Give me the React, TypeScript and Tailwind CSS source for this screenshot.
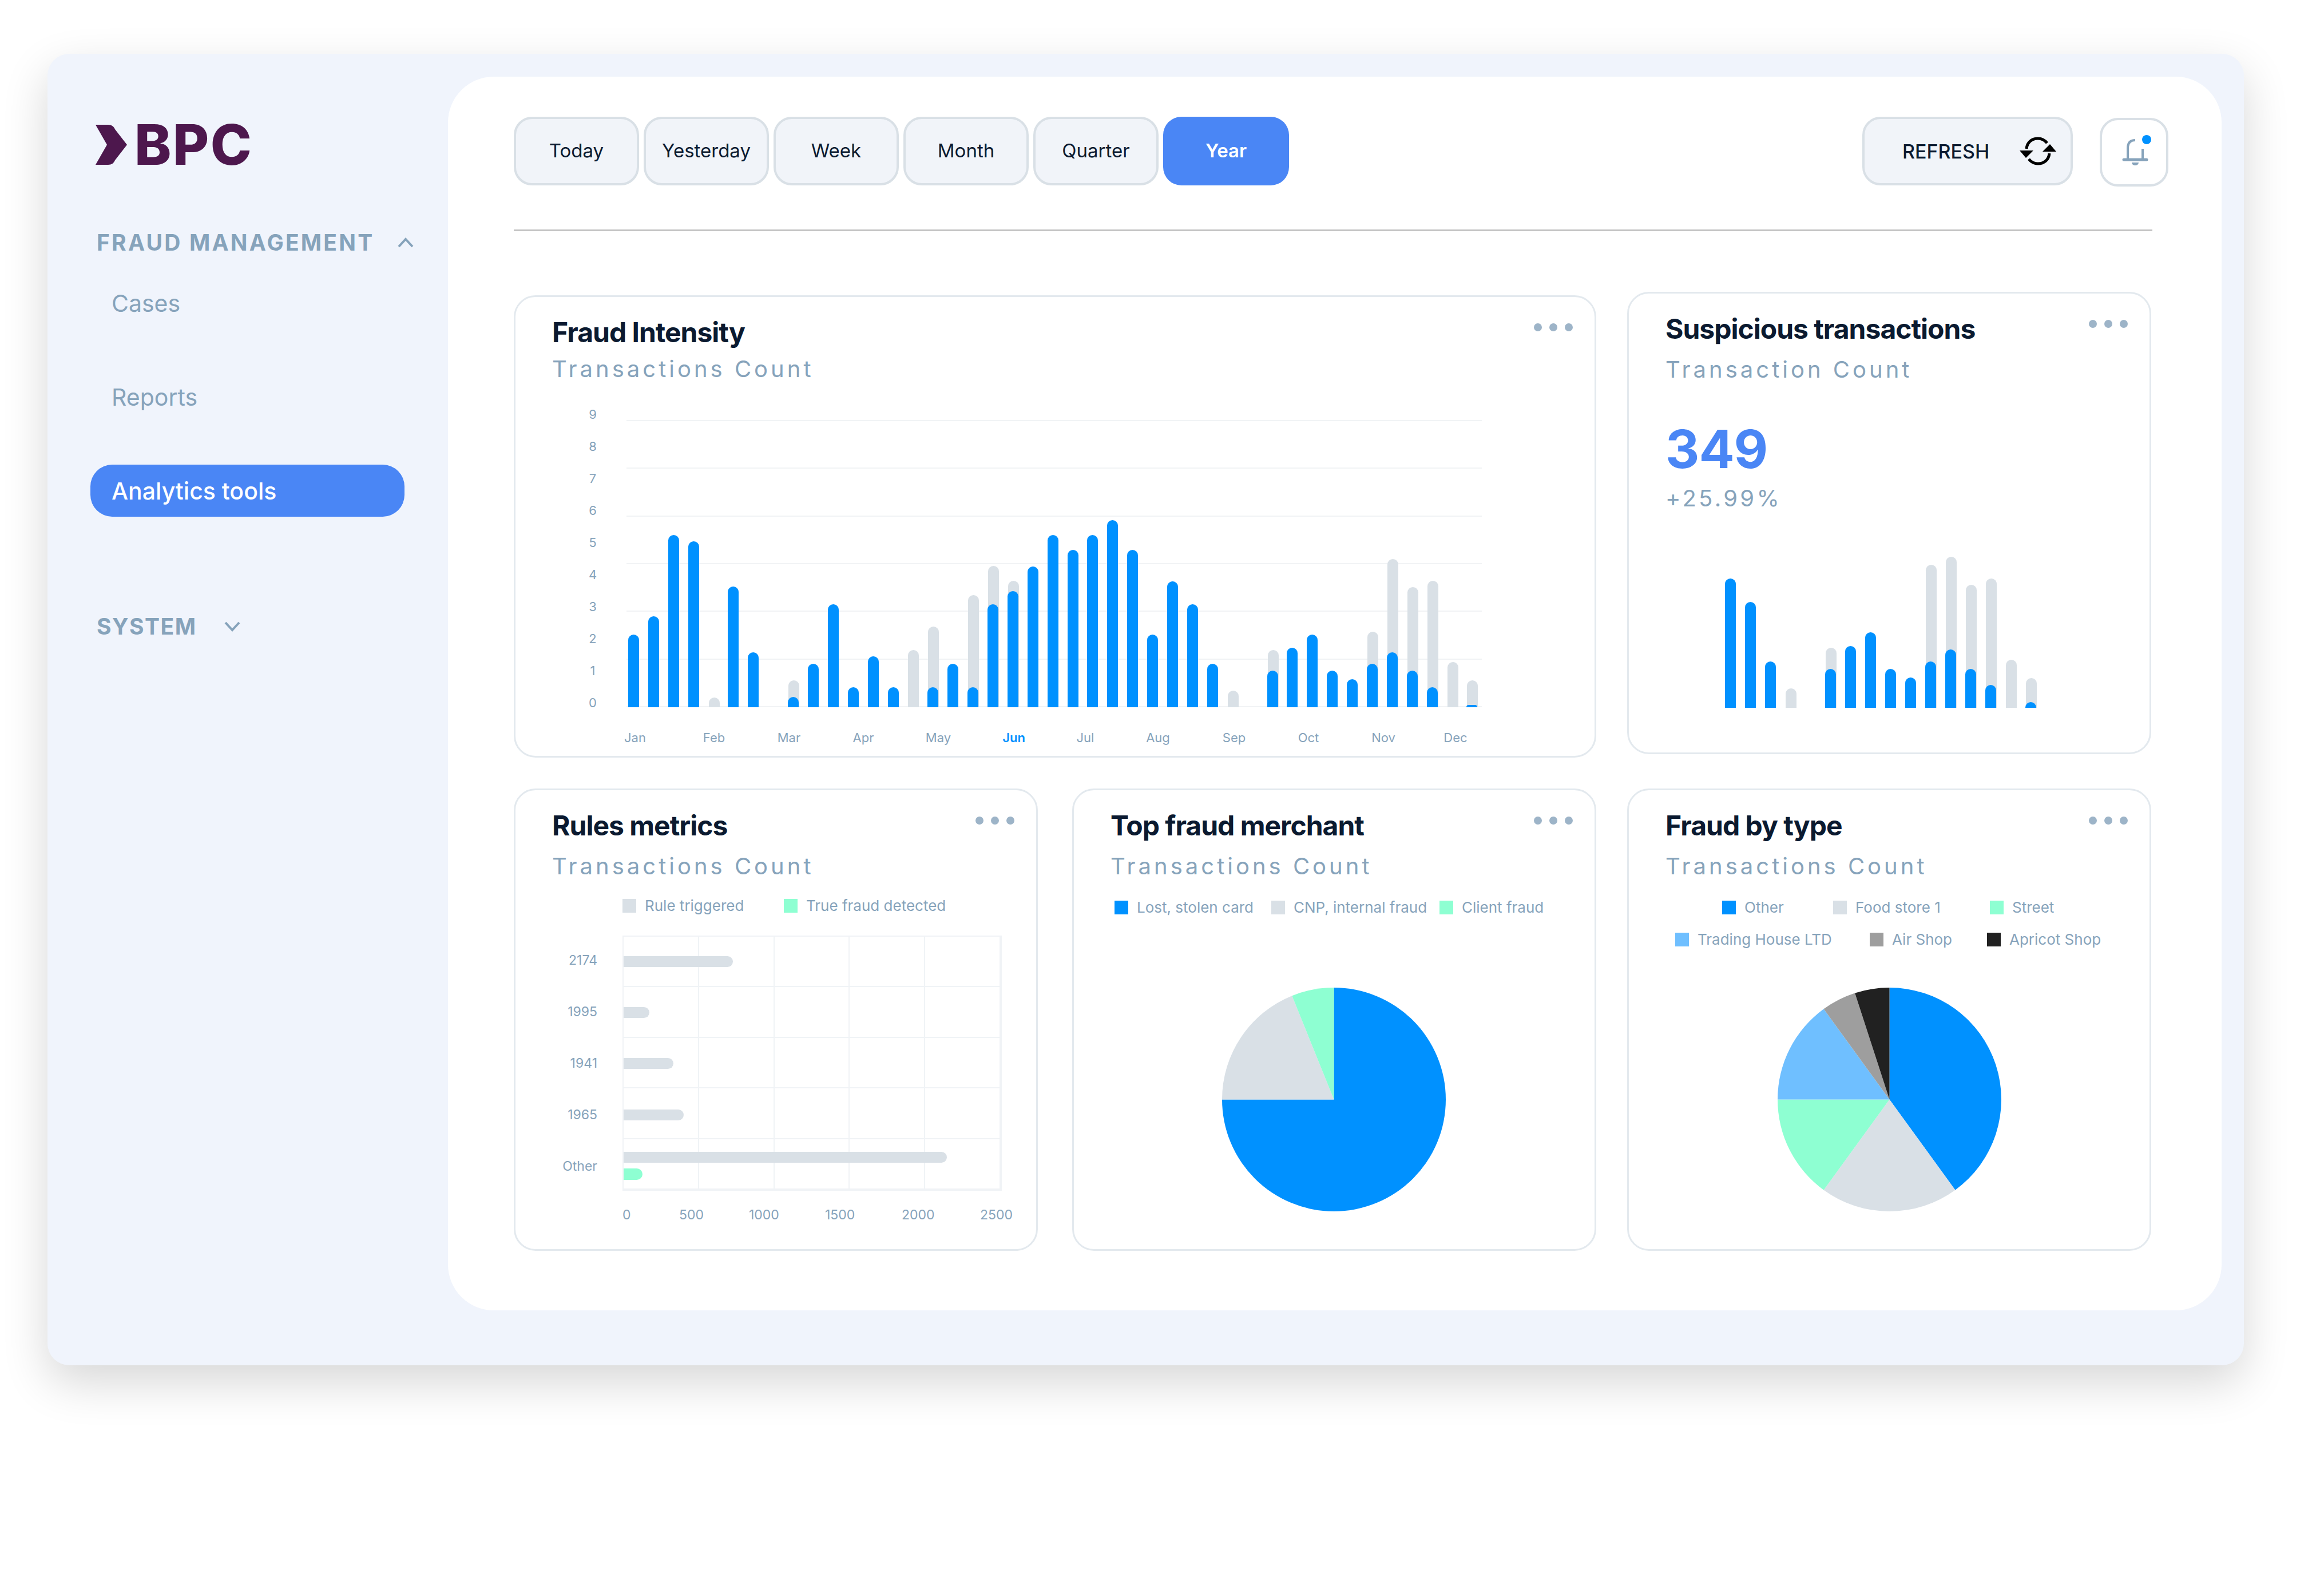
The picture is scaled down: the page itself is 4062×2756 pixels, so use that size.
import React from 'react';

const font = "[font-family:Inter,'Liberation_Sans',sans-serif]";

const ranges = ['Today', 'Yesterday', 'Week', 'Month', 'Quarter', 'Year'];

// [blue height, grey height] per slot, px from the baseline
const intensity: [number, number][] = [
  [127, 0], [159, 0], [301, 0], [290, 0], [0, 17], [211, 0], [96, 0], [0, 0], [18, 47], [76, 0], [180, 0],
  [35, 0], [89, 0], [35, 0], [0, 100], [35, 141], [76, 0], [35, 196], [180, 247], [203, 221], [246, 0], [301, 0],
  [275, 0], [301, 0], [327, 0], [275, 0], [127, 0], [220, 0], [180, 0], [76, 0], [0, 29], [0, 0], [64, 100],
  [104, 0], [127, 0], [64, 0], [49, 0], [76, 132], [96, 259], [64, 210], [35, 221], [0, 79], [4, 47],
];

const suspicious: [number, number][] = [
  [226, 0], [185, 0], [81, 0], [0, 34], [0, 0], [68, 105], [108, 0], [132, 0], [68, 0], [53, 0],
  [81, 250], [102, 264], [68, 215], [40, 226], [0, 84], [10, 52],
];

const months = [
  ['Jan', 1110], ['Feb', 1248], ['Mar', 1379], ['Apr', 1509], ['May', 1640], ['Jun', 1772],
  ['Jul', 1897], ['Aug', 2024], ['Sep', 2157], ['Oct', 2287], ['Nov', 2418], ['Dec', 2544],
] as const;

function polar(cx: number, cy: number, r: number, deg: number) {
  const a = ((deg - 90) * Math.PI) / 180;
  return `${cx + r * Math.cos(a)} ${cy + r * Math.sin(a)}`;
}

function Pie({ slices }: { slices: [number, number, string][] }) {
  return (
    <svg width="391" height="391" viewBox="0 0 392 392" className="block">
      {slices.map(([from, to, color]) => (
        <path
          key={color}
          fill={color}
          d={`M196 196L${polar(196, 196, 196, from)}A196 196 0 ${to - from > 180 ? 1 : 0} 1 ${polar(196, 196, 196, to)}Z`}
        />
      ))}
    </svg>
  );
}

function Dots() {
  return (
    <div className="flex gap-[13px]">
      <span className="h-[14px] w-[14px] rounded-full bg-[#9db4c8]" />
      <span className="h-[14px] w-[14px] rounded-full bg-[#9db4c8]" />
      <span className="h-[14px] w-[14px] rounded-full bg-[#9db4c8]" />
    </div>
  );
}

function Card({ title, sub, className, subClass = 'mt-[18px]', children }: { title: string; sub: string; className: string; subClass?: string; children?: React.ReactNode }) {
  return (
    <div className={`relative rounded-[38px] border-[3px] border-[#e3e9ee] bg-white pl-[64px] ${className}`}>
      <div className="absolute right-[38px] top-[46px]">
        <Dots />
      </div>
      <h3 className="pt-[33px] text-[48px] leading-[58px] font-bold tracking-[-1px] text-[#0b1a30]">{title}</h3>
      <p className={`text-[40px] leading-[48px] tracking-[5px] text-[#86a3bb] ${subClass}`}>{sub}</p>
      {children}
    </div>
  );
}

function Bar({ blue, grey }: { blue: number; grey: number }) {
  return (
    <div className="relative w-[19px]">
      {grey > 0 && <div className="absolute bottom-0 left-px w-[19px] rounded-t-full bg-[#d9e0e6]" style={{ height: grey }} />}
      {blue > 0 && <div className="absolute bottom-0 left-0 w-[19px] rounded-t-full bg-[#0091ff]" style={{ height: blue }} />}
    </div>
  );
}

function Legend({ color, label, className }: { color: string; label: string; className?: string }) {
  return (
    <div className={`flex items-center gap-[15px] ${className ?? ''}`}>
      <span className="h-[24px] w-[24px] shrink-0" style={{ background: color }} />
      <span className="text-[26px] leading-[32px] whitespace-nowrap text-[#86a3bb]">{label}</span>
    </div>
  );
}

function RefreshIcon() {
  return (
    <svg width="64" height="50" viewBox="0 0 64 50" fill="none">
      <path d="M12 21C13 10 21 3 32 3c7 0 12 3 16 8" stroke="#000" strokeWidth="5" />
      <path d="M52 29C51 40 43 47 32 47c-7 0-12-3-16-8" stroke="#000" strokeWidth="5" />
      <path d="M0 24h24L11 37Z" fill="#000" />
      <path d="M64 26H40L53 13Z" fill="#000" />
    </svg>
  );
}

function BellIcon() {
  return (
    <svg width="48" height="48" viewBox="0 0 48 48" fill="none">
      <path d="M24 3C15 3 11 8 11 17v20" stroke="#86a3bb" strokeWidth="4" />
      <path d="M37 18v19" stroke="#86a3bb" strokeWidth="4" />
      <path d="M4 37h40" stroke="#86a3bb" strokeWidth="5" strokeLinecap="round" />
      <path d="M18 42h12c0 3-3 5-6 5s-6-2-6-5Z" fill="#86a3bb" />
    </svg>
  );
}

export default function App() {
  return (
    <div className={`min-h-[2756px] bg-white pt-[94px] pl-[83px] ${font}`}>
      <div className="flex h-[2292px] w-[3839px] rounded-[38px] bg-[#f0f4fc] shadow-[0_30px_80px_rgba(0,0,0,0.16)]">
        {/* sidebar */}
        <aside className="w-[700px] shrink-0 pl-[75px]">
          <div className="mt-[124px] flex items-center gap-[13px] pl-[9px]">
            <svg width="55" height="70" viewBox="0 0 55 70">
              <path d="M0 0h22c6 0 10 3 12 8l21 27-21 27c-2 5-6 8-12 8H0l20-35Z" fill="#4d174d" />
            </svg>
            <span className="text-[97px] leading-[70px] font-extrabold tracking-[2.5px] text-[#4d174d]">BPC</span>
          </div>

          <div className="mt-[112px] flex items-center gap-[41px] pl-[11px]">
            <span className="text-[39px] leading-[48px] font-bold tracking-[3.2px] text-[#86a3bb]">FRAUD MANAGEMENT</span>
            <svg width="28" height="18" viewBox="0 0 28 18" fill="none">
              <path d="M2 16L14 3l12 13" stroke="#86a3bb" strokeWidth="4" />
            </svg>
          </div>
          <div className="mt-[56px] flex flex-col text-[41px] leading-[52px] text-[#86a3bb]">
            <span className="pl-[37px]">Cases</span>
            <span className="mt-[112px] pl-[37px]">Reports</span>
            <span className="mt-[92px] flex h-[91px] w-[549px] items-center rounded-[38px] bg-[#4a86f5] pl-[37px] font-medium text-white">Analytics tools</span>
          </div>
          <div className="mt-[168px] flex items-center gap-[48px] pl-[11px]">
            <span className="text-[39px] leading-[48px] font-bold tracking-[1.5px] text-[#86a3bb]">SYSTEM</span>
            <svg width="28" height="18" viewBox="0 0 28 18" fill="none">
              <path d="M2 2l12 13L26 2" stroke="#86a3bb" strokeWidth="4" />
            </svg>
          </div>
        </aside>

        {/* main */}
        <main className="mt-[40px] h-[2156px] w-[3100px] rounded-[80px] bg-white pt-[70px] pl-[115px]">
          <div className="flex h-[122px] w-[2892px] items-start justify-between">
            <div className="flex gap-[8px]">
              {ranges.map((r) =>
                r === 'Year' ? (
                  <button key={r} className="h-[120px] w-[220px] rounded-[32px] bg-[#4a86f5] text-[33px] font-semibold text-white">
                    {r}
                  </button>
                ) : (
                  <button key={r} className="h-[120px] w-[219px] rounded-[32px] border-[4px] border-[#d9e0e6] bg-[#f1f4f9] text-[33px] text-[#0b1a30]">
                    {r}
                  </button>
                ),
              )}
            </div>
            <div className="flex items-start gap-[47px]">
              <button className="flex h-[120px] w-[368px] items-center rounded-[32px] border-[4px] border-[#d9e0e6] bg-[#f1f4f9] pl-[66px] text-[34px] font-medium text-[#0b1a30]">
                <span className="w-[205px] text-left">REFRESH</span>
                <RefreshIcon />
              </button>
              <button className="relative mt-[2px] flex h-[120px] w-[120px] items-center justify-center rounded-[32px] border-[4px] border-[#d9e0e6] bg-white pl-[3px]">
                <BellIcon />
                <span className="absolute top-[26px] right-[26px] h-[16px] w-[16px] rounded-full bg-[#0091ff]" />
              </button>
            </div>
          </div>
          <div className="mt-[75px] h-[3px] w-[2864px] bg-[#c4c4c4]" />

          {/* top row */}
          <div className="mt-[106px] flex gap-[54px]">
            <Card title="Fraud Intensity" sub="Transactions Count" subClass="mt-[11px]" className="mt-[6px] h-[808px] w-[1892px]">
              <div className="relative">
                {/* plot area */}
                <div className="absolute top-[65px] left-[130px] flex h-[502px] w-[1495px] flex-col justify-between">
                  {[0, 1, 2, 3, 4, 5, 6].map((i) => (
                    <div key={i} className="h-[2px] bg-[#f1f3f5]" />
                  ))}
                </div>
                <div className="absolute top-[47px] left-[59px] flex h-[520px] w-[24px] flex-col justify-between text-center text-[22px] leading-[16px] text-[#86a3bb]">
                  {[9, 8, 7, 6, 5, 4, 3, 2, 1, 0].map((n) => (
                    <span key={n}>{n}</span>
                  ))}
                </div>
                <div className="absolute top-[227px] left-[133px] flex h-[340px] gap-[15.9px]">
                  {intensity.map(([b, g], i) => (
                    <Bar key={i} blue={b} grey={g} />
                  ))}
                </div>
                {months.map(([m, x]) => (
                  <span
                    key={m}
                    className={`absolute top-[606px] -translate-x-1/2 text-[22px] leading-[28px] ${m === 'Jun' ? 'font-semibold text-[#0091ff]' : 'text-[#86a3bb]'}`}
                    style={{ left: x - 965 }}
                  >
                    {m}
                  </span>
                ))}
              </div>
            </Card>

            <Card title="Suspicious transactions" sub="Transaction Count" className="h-[808px] w-[916px]">
              <p className="mt-[59px] text-[92px] leading-[112px] font-bold tracking-[-1px] text-[#4a86f5]">349</p>
              <p className="mt-[6px] text-[40px] leading-[48px] tracking-[4.3px] text-[#86a3bb]">+25.99%</p>
              <div className="mt-[72px] ml-[104px] flex h-[270px] gap-[16px]">
                {suspicious.map(([b, g], i) => (
                  <Bar key={i} blue={b} grey={g} />
                ))}
              </div>
            </Card>
          </div>

          {/* bottom row */}
          <div className="mt-[54px] flex">
            <Card title="Rules metrics" sub="Transactions Count" className="h-[808px] w-[916px]">
              <div className="mt-[29px] ml-[123px] flex">
                <Legend color="#d9e0e6" label="Rule triggered" className="w-[282px]" />
                <Legend color="#8effd2" label="True fraud detected" />
              </div>
              <div className="relative mt-[36px] ml-[123px] h-[446px] w-[663px] border-2 border-[#f0f3f6]">
                <div className="grid h-full w-full grid-cols-5 grid-rows-5">
                  {Array.from({ length: 25 }).map((_, i) => (
                    <div key={i} className="border-r-2 border-b-2 border-[#f0f3f6]" />
                  ))}
                </div>
                <div className="absolute top-[34px] left-0 h-[19px] w-[191px] rounded-r-full bg-[#d9e0e6]" />
                <div className="absolute top-[123px] left-0 h-[19px] w-[45px] rounded-r-full bg-[#d9e0e6]" />
                <div className="absolute top-[212px] left-0 h-[19px] w-[87px] rounded-r-full bg-[#d9e0e6]" />
                <div className="absolute top-[302px] left-0 h-[19px] w-[105px] rounded-r-full bg-[#d9e0e6]" />
                <div className="absolute top-[376px] left-0 h-[19px] w-[565px] rounded-r-full bg-[#d9e0e6]" />
                <div className="absolute top-[405px] left-0 h-[20px] w-[33px] rounded-r-full bg-[#8effd2]" />
                <div className="absolute top-[27px] -left-[181px] flex h-[388px] w-[135px] flex-col justify-between text-right text-[23px] leading-[28px] text-[#86a3bb]">
                  <span>2174</span>
                  <span>1995</span>
                  <span>1941</span>
                  <span>1965</span>
                  <span>Other</span>
                </div>
                <div className="absolute top-[472px] left-0 h-[28px] w-full text-[23px] leading-[28px] text-[#86a3bb]">
                  <span className="absolute -left-[2px]">0</span>
                  <span className="absolute left-[97px]">500</span>
                  <span className="absolute left-[219px]">1000</span>
                  <span className="absolute left-[352px]">1500</span>
                  <span className="absolute left-[486px]">2000</span>
                  <span className="absolute left-[623px]">2500</span>
                </div>
              </div>
            </Card>

            <Card title="Top fraud merchant" sub="Transactions Count" className="ml-[60px] h-[808px] w-[916px]">
              <div className="mt-[32px] ml-[7px] flex">
                <Legend color="#0091ff" label="Lost, stolen card" className="w-[274px]" />
                <Legend color="#d9e0e6" label="CNP, internal fraud" className="w-[294px]" />
                <Legend color="#8effd2" label="Client fraud" />
              </div>
              <div className="mt-[124px] ml-[195px]">
                <Pie slices={[[0, 270, '#0091ff'], [270, 338, '#d9e0e6'], [338, 360, '#8effd2']]} />
              </div>
            </Card>

            <Card title="Fraud by type" sub="Transactions Count" className="ml-[54px] h-[808px] w-[916px]">
              <div className="mt-[32px] flex">
                <Legend color="#0091ff" label="Other" className="ml-[99px] w-[194px]" />
                <Legend color="#d9e0e6" label="Food store 1" className="w-[274px]" />
                <Legend color="#8effd2" label="Street" />
              </div>
              <div className="mt-[24px] flex">
                <Legend color="#6fbfff" label="Trading House LTD" className="ml-[17px] w-[340px]" />
                <Legend color="#9e9e9e" label="Air Shop" className="w-[205px]" />
                <Legend color="#212121" label="Apricot Shop" />
              </div>
              <div className="mt-[68px] ml-[196px]">
                <Pie slices={[[0, 144, '#0091ff'], [144, 216, '#d9e0e6'], [216, 270, '#8effd2'], [270, 324, '#6fbfff'], [324, 342, '#9e9e9e'], [342, 360, '#212121']]} />
              </div>
            </Card>
          </div>
        </main>
      </div>
    </div>
  );
}
